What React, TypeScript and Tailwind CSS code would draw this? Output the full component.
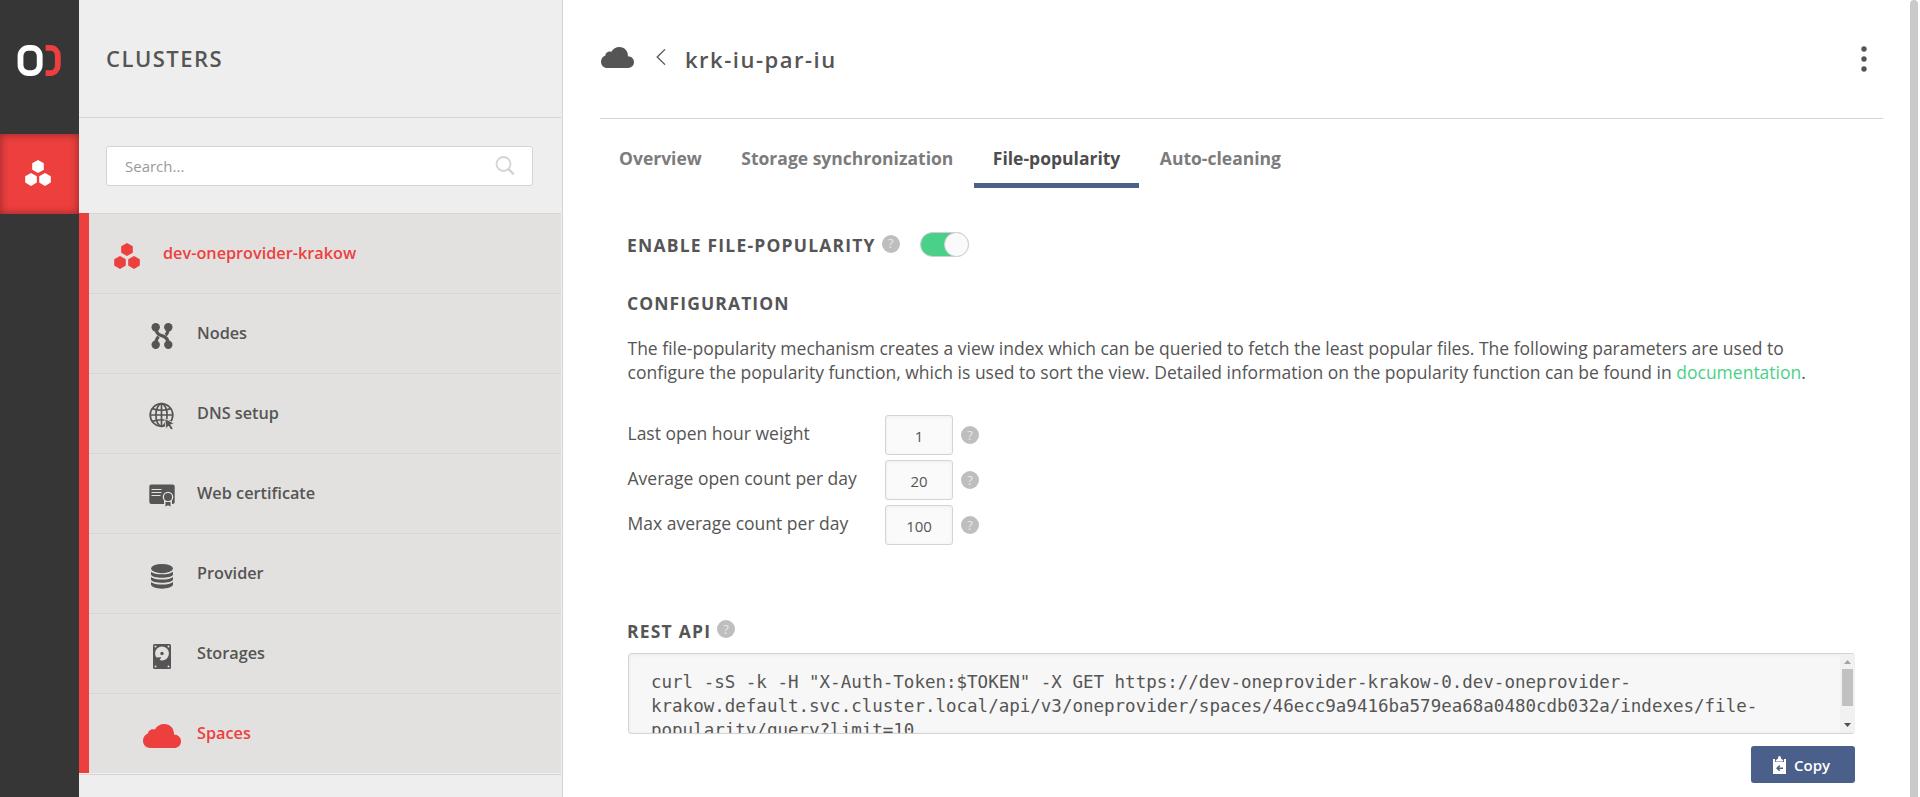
import React from "react";

const Hex = ({ className }: { className: string }) => (
  <svg viewBox="0 0 26 26" className={className} fill="currentColor">
    <path d="M13 0l5.800 3.200v6.600L13 13 7.200 9.800V3.200z" />
    <path d="M6 13l5.800 3.200v6.400L6 25.900.2 22.600V16.200z" />
    <path d="M20 13l5.800 3.200v6.400L20 25.900l-5.800-3.300V16.200z" />
  </svg>
);

const Cloud = ({ className }: { className: string }) => (
  <svg viewBox="0 0 38 24" className={className} fill="currentColor" preserveAspectRatio="none">
    <path d="M7.500 24C3 24 0 20.900 0 16.800c0-3.400 2-6.200 5-7.200 0-3 3.400-5.200 7-4.200C13.800 2 17.200 0 21.200 0c5.800 0 10.200 4.600 9.800 10.600 4 .2 7 3 7 6.600 0 4-3 6.800-7 6.800z" />
  </svg>
);

const NodesIcon = () => (
  <svg viewBox="0 0 22 26" className="h-[26px] w-[22px]" fill="currentColor">
    <circle cx="4.700" cy="4.200" r="4.200" />
    <circle cx="17.300" cy="4.200" r="4.200" />
    <circle cx="4.700" cy="21.800" r="4.200" />
    <circle cx="17.300" cy="21.800" r="4.200" />
    <path d="M4.700 4c0 5 2 7.600 6 8.600M17.300 22c0-5.500-2-8.400-6.600-9.400M17.300 4c0 4-.8 6.400-2.600 8M4.700 22c0-4 .8-6.400 2.900-8.400" fill="none" stroke="currentColor" strokeWidth="3.200" />
  </svg>
);

const GlobeIcon = () => (
  <svg viewBox="0 0 26 28" className="h-[28px] w-[26px]">
    <g fill="none" stroke="currentColor" strokeWidth="1.700">
      <circle cx="12.500" cy="13" r="11.300" />
      <ellipse cx="12.500" cy="13" rx="5.600" ry="11.300" />
      <path d="M12.500 1.800v22.400M1.300 13h22.400M3.500 6.600c5 2.200 13 2.200 18 0M3.500 19.400c5-2.200 13-2.200 18 0" />
    </g>
    <path d="M15.800 16.500l9.600 5-3.700 1.200 2.500 3.900-2.300 1.400-2.400-4-2.600 2.900z" fill="currentColor" stroke="#e2e1df" strokeWidth="0.900" />
  </svg>
);

const CertIcon = () => (
  <svg viewBox="0 0 26 23" className="mb-[2px] h-[23px] w-[26px]">
    <rect x="0.300" y="0.500" width="25.400" height="19.500" rx="2" fill="currentColor" />
    <path d="M2.500 5.500h10M2.500 8.500h10M2.500 11.500h9" stroke="#e2e1df" strokeWidth="1.200" />
    <path d="M15 15h8v8h-8z" fill="#e2e1df" />
    <circle cx="19" cy="13" r="5.300" fill="#e2e1df" />
    <circle cx="19" cy="13" r="4" fill="currentColor" />
    <path d="M16.500 18h5v4.500L19 21.200l-2.500 1.300z" fill="currentColor" />
  </svg>
);

const DatabaseIcon = () => (
  <svg viewBox="0 0 22 25" className="h-[25px] w-[22px]" fill="currentColor">
    <ellipse cx="11" cy="4.600" rx="11" ry="4.600" />
    <path d="M0 7.800c3 3.400 19 3.400 22 0v2.600c-1 4.400-21 4.400-22 0z" />
    <path d="M0 13c3 3.400 19 3.400 22 0v2.400c-1 4.400-21 4.400-22 0z" />
    <path d="M0 18c3 3.400 19 3.400 22 0v2.600c-1 5.400-21 5.400-22 0z" />
  </svg>
);

const DiskIcon = () => (
  <svg viewBox="0 0 18 25" className="h-[25px] w-[18px]">
    <rect width="18" height="25" rx="1.500" fill="currentColor" />
    <circle cx="9" cy="9.500" r="6.900" fill="#e2e1df" />
    <circle cx="9" cy="9.500" r="1.700" fill="currentColor" />
    <path d="M2.500 13.500l5.800-.3-2.600 4.600z" fill="currentColor" />
    <g fill="#e2e1df">
      <circle cx="2.500" cy="2.600" r="1" />
      <circle cx="15.500" cy="2.600" r="1" />
      <circle cx="2.500" cy="22.400" r="1" />
      <circle cx="15.500" cy="22.400" r="1" />
    </g>
  </svg>
);

const Help = () => (
  <span className="flex size-[18px] shrink-0 items-center justify-center rounded-full bg-[#bebebe] text-[13px] leading-none text-[#e8e8e8]">?</span>
);

const items = [
  { label: "Nodes", icon: <NodesIcon /> },
  { label: "DNS setup", icon: <GlobeIcon /> },
  { label: "Web certificate", icon: <CertIcon /> },
  { label: "Provider", icon: <DatabaseIcon /> },
  { label: "Storages", icon: <DiskIcon /> },
  { label: "Spaces", icon: <Cloud className="mr-px h-[24px] w-[38px] shrink-0" />, active: true },
];

const params = [
  { label: "Last open hour weight", value: "1" },
  { label: "Average open count per day", value: "20" },
  { label: "Max average count per day", value: "100" },
];

const tabs = ["Overview", "Storage synchronization", "File-popularity", "Auto-cleaning"];

function Rail() {
  return (
    <nav className="flex w-[79px] shrink-0 flex-col bg-[#363636]">
      <div className="flex h-[134px] items-start pt-[45px] pl-[17px]">
        <svg viewBox="0 0 46 31" className="h-[31px] w-[46px]" fill="none" strokeWidth="5.800">
          <rect x="3.500" y="2.900" width="19.200" height="25.200" rx="8" stroke="#fff" />
          <path d="M28.600 2.900h5c4 0 7.200 3.400 7.200 7.600v10c0 4.200-3.200 7.600-7.200 7.600h-5" stroke="#ee3f3f" />
        </svg>
      </div>
      <div className="flex h-[80px] items-center justify-center bg-[#ee3f3f] pr-[3px] pb-[2px] text-white shadow-[inset_0_0_10px_rgba(0,0,0,0.4)]">
        <Hex className="size-[26px]" />
      </div>
    </nav>
  );
}

function Sidebar() {
  return (
    <aside className="flex w-[484px] shrink-0 flex-col border-r border-[#d4d4d4] bg-[#eee] pr-px">
      <div className="flex h-[118px] items-center border-b border-[#d4d4d4] pl-[27px]">
        <h1 className="text-[22px] font-semibold tracking-[1.500px]">CLUSTERS</h1>
      </div>
      <div className="h-[95px] px-[27px] pt-[28px] pr-[28px]">
        <div className="flex h-10 items-center justify-between rounded-[3px] border border-[#d4d4d4] bg-white pr-[17px] pl-[18px]">
          <span className="text-[15px] text-[#9a9a9a]">Search...</span>
          <svg viewBox="0 0 20 20" className="size-5" fill="none" stroke="#d4d4d4" strokeWidth="1.800">
            <circle cx="8.500" cy="8" r="7" />
            <path d="M13.300 12.800l5.500 5.500" strokeWidth="2.400" />
          </svg>
        </div>
      </div>
      <ul className="h-[560px] border-l-[10px] border-[#ee3f3f] bg-[#e2e1df] text-[16.250px] font-semibold">
        <li className="flex h-20 items-center border-t border-t-[#d4d4d4] pl-[25px] text-[#ee3f3f]">
          <Hex className="mt-[5px] size-[26px]" />
          <span className="ml-[23px]">dev-oneprovider-krakow</span>
        </li>
        {items.map((it) => (
          <li key={it.label} className={`flex h-20 items-center border-t border-t-[#d6d6d6] pl-[54px] ${it.active ? "text-[#ee3f3f]" : ""}`}>
            <span className="mt-[5px] flex w-[38px] justify-center">{it.icon}</span>
            <span className="ml-[16px]">{it.label}</span>
          </li>
        ))}
      </ul>
      <div className="mt-px border-t border-[#d4d4d4]" />
    </aside>
  );
}

export default function App() {
  return (
    <div className="flex h-[797px] w-[1920px] overflow-hidden bg-white font-['Open_Sans',sans-serif] text-[#555]">
      <Rail />
      <Sidebar />
      <main className="w-[1347px] shrink-0 pr-[27px] pl-[37px]">
        <header className="flex h-[119px] items-center border-b border-[#d4d4d4]">
          <Cloud className="mb-[3px] ml-px h-[21px] w-[33px]" />
          <svg viewBox="0 0 10 16" className="mb-[4px] ml-[22px] h-4 w-[10px]" fill="none" stroke="currentColor" strokeWidth="1.300">
            <path d="M9 .4L1.200 8 9 15.600" />
          </svg>
          <h2 className="ml-[19px] pt-px text-[22px] font-semibold tracking-[1.500px]">krk-iu-par-iu</h2>
          <svg viewBox="0 0 6 26" className="mr-[16px] ml-auto h-[26px] w-[6px]" fill="currentColor">
            <circle cx="3" cy="3" r="2.700" />
            <circle cx="3" cy="13" r="2.700" />
            <circle cx="3" cy="23" r="2.700" />
          </svg>
        </header>
        <div className="flex h-[69px] gap-[1.500px] text-[17.500px] font-bold text-[#7c7c7c]">
          {tabs.map((t) => (
            <div key={t} className={`border-b-[5px] px-[19px] pt-[26px] ${t === "File-popularity" ? "border-[#4a5f8a] text-[#4d4d4d]" : "border-transparent"}`}>
              {t}
            </div>
          ))}
        </div>
        <div className="flex flex-col pr-[28px] pl-[28px] text-[17.500px] leading-6">
          <div className="mt-[44px] flex h-6 items-center font-bold tracking-[1.200px]">
            <span className="-ml-px mt-px text-[17.500px]">ENABLE FILE-POPULARITY</span>
            <span className="mb-px ml-[6px] font-normal tracking-normal"><Help /></span>
            <span className="ml-[20px] flex h-[25px] w-[49px] items-center justify-end rounded-full border border-[#cfcfcf] bg-[#4bd187]">
              <span className="-mr-px size-[25px] shrink-0 rounded-full border border-[#cfcfcf] bg-[#fafafa]" />
            </span>
          </div>
          <h3 className="-ml-px mt-[35px] text-[17.500px] font-bold tracking-[1.100px]">CONFIGURATION</h3>
          <p className="mt-[21px] -ml-[0.500px] whitespace-nowrap">
            The file-popularity mechanism creates a view index which can be queried to fetch the least popular files. The following parameters are used to
            <br />
            configure the popularity function, which is used to sort the view. Detailed information on the popularity function can be found in <span className="text-[#4bd187]">documentation</span>.
          </p>
          <div className="mt-[31px] flex flex-col gap-[5px]">
            {params.map((p) => (
              <div key={p.label} className="flex h-10 items-center">
                <span className="-ml-[0.500px] w-[257.500px] pb-[4px]">{p.label}</span>
                <span className="flex h-10 w-[68px] items-center justify-center rounded-[3px] border border-[#d4d4d4] bg-[#fafafa] pt-px text-[15px] shadow-[inset_0_1px_4px_rgba(0,0,0,0.05)]">{p.value}</span>
                <span className="ml-[8px]"><Help /></span>
              </div>
            ))}
          </div>
          <div className="mt-[72px] flex h-6 items-center font-bold tracking-[1.200px]">
            <span className="-ml-px mt-[3px] text-[17.500px]">REST API</span>
            <span className="ml-[6px] font-normal tracking-normal"><Help /></span>
          </div>
          <div className="mt-[12px] flex h-[81px] overflow-hidden rounded-[4px] border border-r-0 border-[#d4d4d4] bg-[#f7f7f7] shadow-[inset_0_1px_4px_rgba(0,0,0,0.05)]">
            <pre className="grow pt-[16px] pl-[22px] font-['DejaVu_Sans_Mono',monospace] text-[17.500px] leading-6">
              {'curl -sS -k -H "X-Auth-Token:$TOKEN" -X GET https://dev-oneprovider-krakow-0.dev-oneprovider-\nkrakow.default.svc.cluster.local/api/v3/oneprovider/spaces/46ecc9a9416ba579ea68a0480cdb032a/indexes/file-\npopularity/query?limit=10'}
            </pre>
            <div className="flex w-[15px] shrink-0 flex-col items-center bg-[#f1f1f1]">
              <svg viewBox="0 0 7 4" className="mt-[6px] h-1 w-[7px]" fill="#a3a3a3"><path d="M3.500 0L7 4H0z" /></svg>
              <div className="mt-[5px] h-[37px] w-[11px] bg-[#c1c1c1]" />
              <svg viewBox="0 0 7 4" className="mt-[17px] h-1 w-[7px]" fill="#505050"><path d="M3.500 4L7 0H0z" /></svg>
            </div>
          </div>
          <button className="mt-[12px] flex h-[37px] w-[104px] items-center self-end rounded-[3px] bg-[#4a5f8a] pl-[22px] text-[15px] font-semibold text-white">
            <svg viewBox="0 0 13 18" className="h-[18px] w-[13px]">
              <path d="M0 3h13v15H0z" fill="#fff" />
              <path d="M2 3h9v3H2z" fill="#4a5f8a" />
              <path d="M2.800 5.400V4L5 2.800C5 .8 5.500 0 6.500 0S8 .8 8 2.800L10.200 4v1.400z" fill="#fff" />
              <path d="M10 12.200H4.500M6.800 9.600l-2.700 2.600 2.700 2.600" stroke="#4a5f8a" strokeWidth="1.500" fill="none" />
            </svg>
            <span className="ml-[8px]">Copy</span>
          </button>
        </div>
      </main>
      <div className="w-[10px] shrink-0">
        <div className="h-[830px] w-2 rounded-full bg-[#cacaca]" />
      </div>
    </div>
  );
}
